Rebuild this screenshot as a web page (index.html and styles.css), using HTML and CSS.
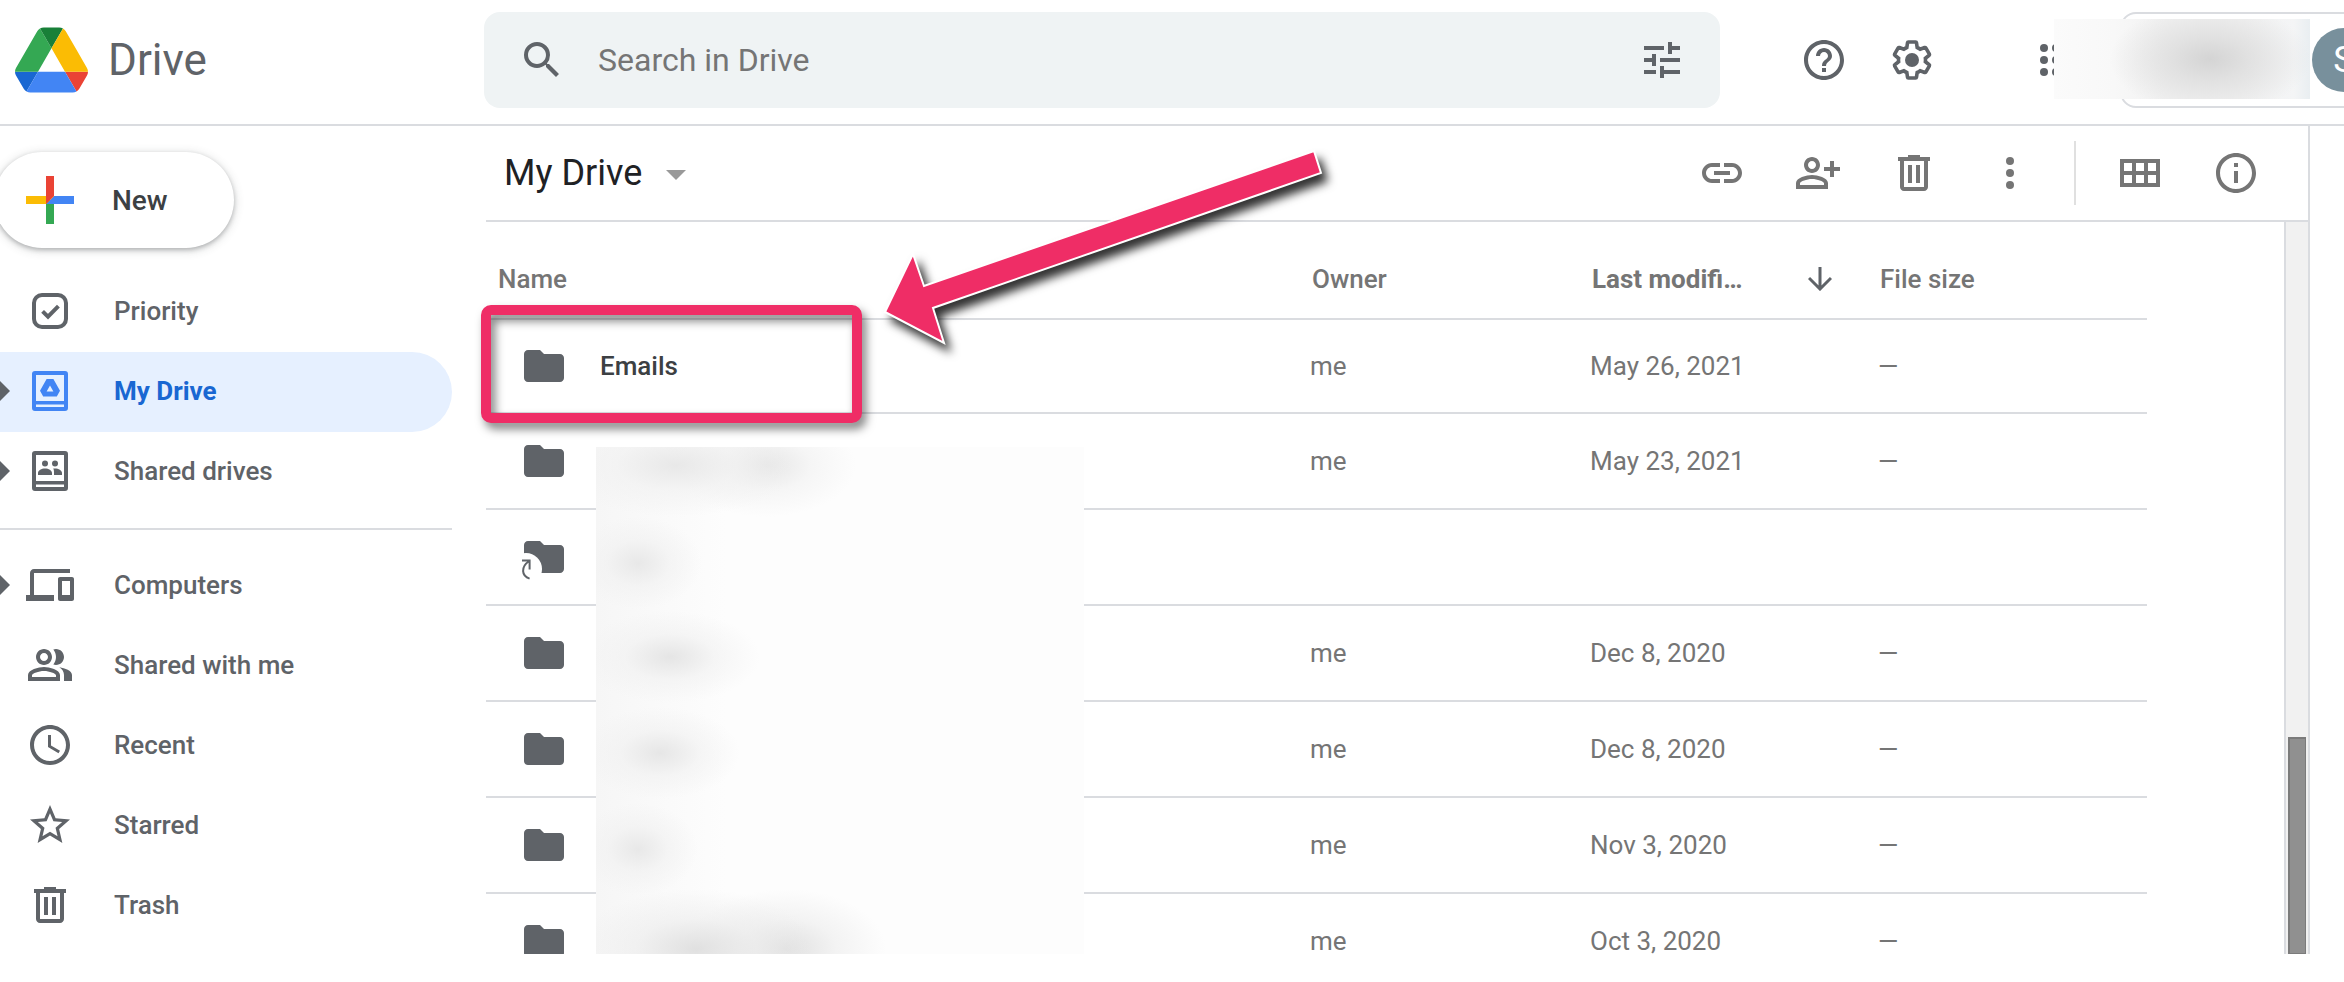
FILE: index.html
```html
<!DOCTYPE html>
<html lang="en">

<head>
    <meta charset="UTF-8">
    <meta name="viewport" content="width=device-width, initial-scale=1.0">
    <title>My Drive - Drive</title>
    <link rel="stylesheet" href="styles.css">
</head>

<body>
    <!-- icons used more than once -->
    <svg class="defs" aria-hidden="true">
        <symbol id="folder" viewBox="0 0 24 24">
            <path d="M10 4H4c-1.1 0-2 .9-2 2v12c0 1.1.9 2 2 2h16c1.1 0 2-.9 2-2V8c0-1.1-.9-2-2-2h-8l-2-2z" />
        </symbol>
        <symbol id="trash" viewBox="0 0 24 24">
            <path d="M15 4V3H9v1H4v2h1v13c0 1.1.9 2 2 2h10c1.1 0 2-.9 2-2V6h1V4h-5zm2 15H7V6h10v13zM9 8h2v9H9zM13 8h2v9h-2z" />
        </symbol>
    </svg>

    <header class="header">
        <a class="brand" href="#">
            <svg class="logo" viewBox="0 0 87.3 78" aria-hidden="true">
                <path fill="#1967d2" d="m6.6 66.85 3.85 6.65c.8 1.4 1.95 2.5 3.3 3.3l13.75-23.8h-27.5c0 1.55.4 3.1 1.2 4.5z" />
                <path fill="#34a853" d="m43.65 25-13.75-23.8c-1.35.8-2.5 1.9-3.3 3.3l-25.4 44a9.06 9.06 0 0 0 -1.2 4.5h27.5z" />
                <path fill="#ea4335" d="m73.55 76.8c1.35-.8 2.5-1.9 3.3-3.3l1.6-2.75 7.65-13.25c.8-1.4 1.2-2.95 1.2-4.5h-27.5z" />
                <path fill="#188038" d="m43.65 25 13.75-23.8c-1.35-.8-2.9-1.2-4.5-1.2h-18.5c-1.6 0-3.15.45-4.5 1.2z" />
                <path fill="#4285f4" d="m59.8 53h-32.3l-13.75 23.8c1.35.8 2.9 1.2 4.5 1.2h50.8c1.6 0 3.15-.45 4.5-1.2z" />
                <path fill="#fbbc04" d="m73.4 26.5-12.7-22c-.8-1.4-1.95-2.5-3.3-3.3l-13.75 23.8 16.15 28h27.45c0-1.55-.4-3.1-1.2-4.5z" />
            </svg>
            <span>Drive</span>
        </a>

        <form class="search" role="search">
            <button type="button" class="icon-btn" aria-label="Search">
                <svg class="icon" viewBox="0 0 24 24"><path d="M15.5 14h-.79l-.28-.27A6.47 6.47 0 0 0 16 9.5 6.5 6.5 0 1 0 9.5 16c1.61 0 3.09-.59 4.23-1.57l.27.28v.79l5 4.99L20.49 19l-4.99-5zm-6 0C7.01 14 5 11.99 5 9.5S7.01 5 9.5 5 14 7.01 14 9.5 11.99 14 9.5 14z" /></svg>
            </button>
            <input type="text" placeholder="Search in Drive" aria-label="Search in Drive">
            <button type="button" class="icon-btn" aria-label="Search options">
                <svg class="icon" viewBox="0 0 24 24"><path d="M3 17v2h6v-2H3zM3 5v2h10V5H3zm10 16v-2h8v-2h-8v-2h-2v6h2zM7 9v2H3v2h4v2h2V9H7zm14 4v-2H11v2h10zm-6-4h2V7h4V5h-4V3h-2v6z" /></svg>
            </button>
        </form>

        <div class="header-actions">
            <button type="button" class="icon-btn" aria-label="Support">
                <svg class="icon" viewBox="0 0 24 24"><path d="M11 18h2v-2h-2v2zm1-16C6.48 2 2 6.48 2 12s4.48 10 10 10 10-4.48 10-10S17.52 2 12 2zm0 18c-4.41 0-8-3.59-8-8s3.59-8 8-8 8 3.59 8 8-3.59 8-8 8zm0-14c-2.21 0-4 1.79-4 4h2c0-1.1.9-2 2-2s2 .9 2 2c0 2-3 1.75-3 5h2c0-2.25 3-2.5 3-5 0-2.21-1.79-4-4-4z" /></svg>
            </button>
            <button type="button" class="icon-btn" aria-label="Settings">
                <svg class="icon" viewBox="0 0 24 24">
                    <path class="line" transform="translate(1.2 1.2) scale(.9)" d="M19.43 12.98c.04-.32.07-.64.07-.98 0-.34-.03-.66-.07-.98l2.11-1.65c.19-.15.24-.42.12-.64l-2-3.46c-.09-.16-.26-.25-.44-.25-.06 0-.12.01-.17.03l-2.49 1c-.52-.4-1.08-.73-1.69-.98l-.38-2.65C14.46 2.18 14.25 2 14 2h-4c-.25 0-.46.18-.49.42l-.38 2.65c-.61.25-1.17.59-1.69.98l-2.49-1c-.06-.02-.12-.03-.18-.03-.17 0-.34.09-.43.25l-2 3.46c-.13.22-.07.49.12.64l2.11 1.65c-.04.32-.07.65-.07.98 0 .33.03.66.07.98l-2.11 1.65c-.19.15-.24.42-.12.64l2 3.46c.09.16.26.25.44.25.06 0 .12-.01.17-.03l2.49-1c.52.4 1.08.73 1.69.98l.38 2.65c.03.24.24.42.49.42h4c.25 0 .46-.18.49-.42l.38-2.65c.61-.25 1.17-.59 1.69-.98l2.49 1c.06.02.12.03.18.03.17 0 .34-.09.43-.25l2-3.46c.12-.22.07-.49-.12-.64l-2.11-1.65z" />
                    <circle cx="12" cy="12" r="3.5" />
                </svg>
            </button>
            <button type="button" class="icon-btn apps" aria-label="Google apps">
                <svg class="icon" viewBox="0 0 24 24">
                    <circle cx="6" cy="6" r="2" /><circle cx="12" cy="6" r="2" /><circle cx="18" cy="6" r="2" />
                    <circle cx="6" cy="12" r="2" /><circle cx="12" cy="12" r="2" /><circle cx="18" cy="12" r="2" />
                    <circle cx="6" cy="18" r="2" /><circle cx="12" cy="18" r="2" /><circle cx="18" cy="18" r="2" />
                </svg>
            </button>
            <button type="button" class="account" aria-label="Account"><span class="avatar">S</span></button>
            <div class="redact redact-account"></div>
        </div>
    </header>

    <div class="layout">
        <aside class="sidebar">
            <button type="button" class="new-btn">
                <svg viewBox="6 6 24 24" aria-hidden="true">
                    <path fill="#34a853" d="M16 16v14h4V20z" />
                    <path fill="#4285f4" d="M30 16H20l-4 4h14z" />
                    <path fill="#fbbc04" d="M6 16v4h10l4-4z" />
                    <path fill="#ea4335" d="M20 16V6h-4v14z" />
                </svg>
                New
            </button>
            <nav>
                <a class="nav-item" href="#">
                    <svg class="icon" viewBox="0 0 24 24">
                        <rect class="line" x="4" y="4" width="16" height="16" rx="4" />
                        <path class="line" d="M8.3 12.2l2.7 2.6 5.2-5.2" />
                    </svg>
                    Priority
                </a>
                <a class="nav-item has-arrow active" href="#">
                    <svg class="icon" viewBox="0 0 24 24">
                        <path fill-rule="evenodd" d="M4.5 2h15A1.5 1.5 0 0 1 21 3.5v17a1.5 1.5 0 0 1-1.5 1.5h-15A1.5 1.5 0 0 1 3 20.5v-17A1.5 1.5 0 0 1 4.5 2zM5 4v13h14V4zM5 18.8v1.2h14v-1.2z" />
                        <path fill-rule="evenodd" d="M10.3 6h3.4l3.3 5.9-1.6 2.9H8.6L7 11.9zM12 9.3l-1.7 3h3.4z" />
                    </svg>
                    My Drive
                </a>
                <a class="nav-item has-arrow" href="#">
                    <svg class="icon" viewBox="0 0 24 24">
                        <path fill-rule="evenodd" d="M4.5 2h15A1.5 1.5 0 0 1 21 3.5v17a1.5 1.5 0 0 1-1.5 1.5h-15A1.5 1.5 0 0 1 3 20.5v-17A1.5 1.5 0 0 1 4.5 2zM5 4v13h14V4zM5 18.8v1.2h14v-1.2z" />
                        <circle cx="9.5" cy="8.2" r="1.5" />
                        <circle cx="14.5" cy="8.2" r="1.5" />
                        <path d="M6 14v-1c0-1.4 1.7-2.3 3.5-2.3S13 11.600 13 13v1zM13.6 10.8c2-.4 4.4.6 4.4 2.2v1h-4v-1c0-.9 0-1.5-.4-2.2z" />
                    </svg>
                    Shared drives
                </a>
                <hr>
                <a class="nav-item has-arrow" href="#">
                    <svg class="icon" viewBox="0 0 24 24"><path d="M4 6h18V4H4c-1.1 0-2 .9-2 2v11H0v3h14v-3H4V6zm19 2h-6c-.55 0-1 .45-1 1v10c0 .55.45 1 1 1h6c.55 0 1-.45 1-1V9c0-.55-.45-1-1-1zm-1 9h-4v-7h4v7z" /></svg>
                    Computers
                </a>
                <a class="nav-item" href="#">
                    <svg class="icon" viewBox="0 0 24 24">
                        <path d="M9 12c2.21 0 4-1.79 4-4s-1.79-4-4-4-4 1.79-4 4 1.79 4 4 4zm0-6c1.1 0 2 .9 2 2s-.9 2-2 2-2-.9-2-2 .9-2 2-2zM9 13c-2.67 0-8 1.34-8 4v3h16v-3c0-2.66-5.33-4-8-4zm6 5H3v-.99C3.2 16.29 6.3 15 9 15s5.8 1.29 6 2v1z" />
                        <path d="M16.67 13.13C18.04 14.06 19 15.32 19 17v3h4v-3c0-2.18-3.57-3.47-6.33-3.87zM15 12c2.21 0 4-1.79 4-4s-1.79-4-4-4c-.47 0-.91.1-1.33.24C14.5 5.27 15 6.58 15 8s-.5 2.73-1.33 3.76c.42.14.86.24 1.33.24z" />
                    </svg>
                    Shared with me
                </a>
                <a class="nav-item" href="#">
                    <svg class="icon" viewBox="0 0 24 24"><path d="M12 2C6.47 2 2 6.48 2 12s4.47 10 10 10 10-4.48 10-10S17.52 2 12 2zm0 18c-4.42 0-8-3.58-8-8s3.58-8 8-8 8 3.58 8 8-3.58 8-8 8zm.5-13H11v6l5.25 3.15.75-1.23-4.5-2.67z" /></svg>
                    Recent
                </a>
                <a class="nav-item" href="#">
                    <svg class="icon" viewBox="0 0 24 24"><path d="M22 9.24l-7.19-.62L12 2 9.19 8.63 2 9.24l5.46 4.73L5.82 21 12 17.27 18.18 21l-1.63-7.03L22 9.24zM12 15.4l-3.76 2.27 1-4.28-3.32-2.88 4.38-.38L12 6.1l1.71 4.04 4.38.38-3.32 2.88 1 4.28L12 15.4z" /></svg>
                    Starred
                </a>
                <a class="nav-item" href="#">
                    <svg class="icon"><use href="#trash" /></svg>
                    Trash
                </a>
            </nav>
        </aside>

        <main class="main">
            <div class="toolbar">
                <button type="button" class="crumb">My Drive</button>
                <div class="tools">
                    <button type="button" class="icon-btn" aria-label="Get link">
                        <svg class="icon" viewBox="0 0 24 24"><path d="M17 7h-4v2h4c1.65 0 3 1.35 3 3s-1.35 3-3 3h-4v2h4c2.76 0 5-2.24 5-5s-2.24-5-5-5zm-6 8H7c-1.65 0-3-1.35-3-3s1.35-3 3-3h4V7H7c-2.76 0-5 2.24-5 5s2.24 5 5 5h4v-2zm-3-4h8v2H8z" /></svg>
                    </button>
                    <button type="button" class="icon-btn" aria-label="Share">
                        <svg class="icon" viewBox="0 0 24 24">
                            <path d="M9 12c2.21 0 4-1.79 4-4s-1.79-4-4-4-4 1.79-4 4 1.79 4 4 4zm0-6c1.1 0 2 .9 2 2s-.9 2-2 2-2-.9-2-2 .9-2 2-2zM9 13c-2.67 0-8 1.34-8 4v3h16v-3c0-2.66-5.33-4-8-4zm6 5H3v-.99C3.2 16.29 6.3 15 9 15s5.8 1.29 6 2v1z" />
                            <path d="M20 9V6h-2v3h-3v2h3v3h2v-3h3V9z" />
                        </svg>
                    </button>
                    <button type="button" class="icon-btn" aria-label="Remove">
                        <svg class="icon"><use href="#trash" /></svg>
                    </button>
                    <button type="button" class="icon-btn" aria-label="More actions">
                        <svg class="icon" viewBox="0 0 24 24"><circle cx="12" cy="6" r="2" /><circle cx="12" cy="12" r="2" /><circle cx="12" cy="18" r="2" /></svg>
                    </button>
                    <span class="separator"></span>
                    <button type="button" class="icon-btn" aria-label="Grid view">
                        <svg class="icon" viewBox="0 0 24 24"><path fill-rule="evenodd" d="M2 5h20v14H2zM4 7v4h4V7zM10 7v4h4V7zM16 7v4h4V7zM4 13v4h4v-4zM10 13v4h4v-4zM16 13v4h4v-4z" /></svg>
                    </button>
                    <button type="button" class="icon-btn" aria-label="View details">
                        <svg class="icon" viewBox="0 0 24 24"><path d="M11 7h2v2h-2zm0 4h2v6h-2zm1-9C6.48 2 2 6.48 2 12s4.48 10 10 10 10-4.48 10-10S17.52 2 12 2zm0 18c-4.41 0-8-3.59-8-8s3.59-8 8-8 8 3.59 8 8-3.59 8-8 8z" /></svg>
                    </button>
                </div>
            </div>

            <div class="content">
                <div class="list">
                    <table class="files">
                        <thead>
                            <tr>
                                <th class="col-name">Name</th>
                                <th class="col-owner">Owner</th>
                                <th class="col-date">
                                    <span class="sorted">Last modifi…
                                        <svg viewBox="0 0 24 24" aria-hidden="true"><path class="line" d="M12 0v22M1 11l11 11 11-11" /></svg>
                                    </span>
                                </th>
                                <th class="col-size">File size</th>
                            </tr>
                        </thead>
                        <tbody>
                            <tr>
                                <td><span class="file"><svg class="icon"><use href="#folder" /></svg>Emails</span></td>
                                <td>me</td>
                                <td>May 26, 2021</td>
                                <td>—</td>
                            </tr>
                            <tr>
                                <td><span class="file"><svg class="icon"><use href="#folder" /></svg></span></td>
                                <td>me</td>
                                <td>May 23, 2021</td>
                                <td>—</td>
                            </tr>
                            <tr>
                                <td>
                                    <span class="file">
                                        <svg class="icon" viewBox="0 0 24 24">
                                            <use href="#folder" />
                                            <circle cx="3" cy="18" r="8" fill="#fff" />
                                            <path class="line thin" d="M1 13.7h3.8v4.5M4.6 14C.2 17 .8 21.5 4.8 22.8" />
                                        </svg>
                                    </span>
                                </td>
                                <td></td>
                                <td></td>
                                <td></td>
                            </tr>
                            <tr>
                                <td><span class="file"><svg class="icon"><use href="#folder" /></svg></span></td>
                                <td>me</td>
                                <td>Dec 8, 2020</td>
                                <td>—</td>
                            </tr>
                            <tr>
                                <td><span class="file"><svg class="icon"><use href="#folder" /></svg></span></td>
                                <td>me</td>
                                <td>Dec 8, 2020</td>
                                <td>—</td>
                            </tr>
                            <tr>
                                <td><span class="file"><svg class="icon"><use href="#folder" /></svg></span></td>
                                <td>me</td>
                                <td>Nov 3, 2020</td>
                                <td>—</td>
                            </tr>
                            <tr>
                                <td><span class="file"><svg class="icon"><use href="#folder" /></svg></span></td>
                                <td>me</td>
                                <td>Oct 3, 2020</td>
                                <td>—</td>
                            </tr>
                        </tbody>
                    </table>
                    <div class="redact redact-names"></div>
                </div>
                <div class="scrollbar"><div class="thumb"></div></div>
            </div>

            <!-- callout over the Emails folder -->
            <div class="highlight"></div>
            <svg class="arrow" viewBox="0 0 460 210" aria-hidden="true">
                <path d="M5 168L33 110l11 32L434 7l7 22L53 164l11 35z" />
            </svg>
        </main>
    </div>
</body>

</html>
```
FILE: styles.css
```css
* {
    box-sizing: border-box;
}

body {
    display: flex;
    flex-direction: column;
    height: 100vh;
    margin: 0;
    padding-bottom: 28px;
    overflow: hidden;
    background-color: #fff;
    color: #757575;
    font-family: Roboto, "Liberation Sans", sans-serif;
    font-size: 26px;
}

button {
    padding: 0;
    border: none;
    background: none;
    color: inherit;
    font-family: inherit;
    cursor: pointer;
}

a {
    color: inherit;
    text-decoration: none;
}

.defs {
    display: none;
}

.icon {
    display: block;
    flex: none;
    width: 48px;
    height: 48px;
    fill: currentColor;
}

.line {
    fill: none;
    stroke: currentColor;
    stroke-width: 2;
}

.thin {
    stroke-width: 1;
}

.icon-btn {
    flex: none;
    width: 48px;
    height: 48px;
}

/* header */
.header {
    display: flex;
    flex: none;
    height: 126px;
    padding: 12px 0 16px;
    border-bottom: 2px solid #dadce0;
    color: #5f6368;
}

.brand {
    display: flex;
    flex: none;
    align-items: center;
    gap: 20px;
    width: 484px;
    padding-left: 15px;
    font-size: 44px;
}

.logo {
    width: 73px;
    height: 66px;
}

.search {
    display: flex;
    flex: 1;
    align-items: center;
    gap: 32px;
    min-width: 0;
    padding: 0 34px;
    border-radius: 16px;
    background-color: #eff3f4;
}

.search input {
    flex: 1;
    min-width: 0;
    padding: 0;
    border: none;
    outline: none;
    background: none;
    color: #202124;
    font-family: inherit;
    font-size: 32px;
}

.search input::placeholder {
    color: #757575;
    opacity: 1;
}

.header-actions {
    position: relative;
    display: flex;
    flex: none;
    align-items: center;
    gap: 40px;
    width: 624px;
    padding-left: 80px;
    overflow: hidden;
}

.apps {
    margin-left: 56px;
}

.account {
    flex: none;
    width: 300px;
    height: 96px;
    padding-left: 190px;
    border: 2px solid #dadce0;
    border-radius: 16px;
}

.avatar {
    display: block;
    width: 64px;
    height: 64px;
    border-radius: 50%;
    background-color: #78909c;
    color: #fff;
    font-size: 36px;
    line-height: 64px;
    text-align: center;
}

.redact {
    position: absolute;
    background-color: #fdfdfd;
}

.redact-account {
    top: 7px;
    right: 34px;
    width: 256px;
    height: 80px;
    background-image:
        radial-gradient(ellipse 100px 56px at 156px 40px, #d4d4d4, #dadadab0 40%, #eeeeee00),
        linear-gradient(90deg, #fbfbfb 0, #f8f8f8 60px, #f2f2f2 110px, #f2f2f2 190px, #f4f5f6 240px, #e9eef1 256px);
}

/* sidebar */
.layout {
    display: flex;
    flex: 1;
    min-height: 0;
}

.sidebar {
    flex: none;
    width: 486px;
    padding: 26px 34px 0 0;
    color: #5f6368;
    font-weight: 500;
}

.new-btn {
    display: flex;
    align-items: center;
    gap: 38px;
    width: 240px;
    height: 96px;
    margin: 0 0 24px -6px;
    padding-left: 32px;
    border-radius: 48px;
    box-shadow: 0 2px 4px rgba(60, 64, 67, .3), 0 2px 8px 2px rgba(60, 64, 67, .15);
    color: #3c4043;
    font-size: 28px;
    font-weight: 500;
}

.new-btn svg {
    width: 48px;
    height: 48px;
}

.nav-item {
    display: flex;
    align-items: center;
    gap: 40px;
    height: 80px;
    padding: 0 0 2px 26px;
    border-radius: 0 40px 40px 0;
}

.has-arrow {
    padding-left: 0;
}

.has-arrow::before {
    content: '';
    width: 10px;
    height: 20px;
    margin-right: -24px;
    background-color: #5f6368;
    clip-path: polygon(0 0, 100% 50%, 0 100%);
}

.active {
    background-color: #e6f0ff;
    color: #1967d2;
    font-weight: 700;
}

.active .icon {
    color: #4285f4;
}

.sidebar hr {
    height: 2px;
    margin: 16px 0;
    border: none;
    background-color: #dadce0;
}

/* main */
.main {
    position: relative;
    display: flex;
    flex: 1;
    flex-direction: column;
    min-width: 0;
    margin-right: 34px;
    border-right: 2px solid #dadce0;
}

.toolbar {
    display: flex;
    flex: none;
    align-items: center;
    justify-content: space-between;
    height: 96px;
    padding: 0 48px 0 18px;
    border-bottom: 2px solid #dadce0;
}

.crumb {
    display: flex;
    align-items: center;
    gap: 24px;
    color: #202124;
    font-size: 36px;
}

.crumb::after {
    content: '';
    margin-top: 4px;
    border: 10px solid transparent;
    border-top-color: #999;
    border-bottom: none;
}

.tools {
    display: flex;
    align-items: center;
    gap: 48px;
}

.separator {
    width: 2px;
    height: 64px;
    margin: 0 -8px;
    background-color: #e0e0e0;
}

.content {
    display: flex;
    flex: 1;
    min-height: 0;
}

.list {
    position: relative;
    flex: 1;
    padding-right: 137px;
    overflow: hidden;
}

.files {
    width: 100%;
    border-collapse: separate;
    border-spacing: 0;
    table-layout: fixed;
}

.files th,
.files td {
    height: 96px;
    padding: 0;
    border-bottom: 2px solid #dadce0;
    text-align: left;
    white-space: nowrap;
}

.files th {
    height: 98px;
    padding: 18px 0 0 2px;
    font-weight: 500;
}

.files tbody tr:first-child td {
    height: 94px;
}

.files .col-name {
    padding-left: 12px;
}

.col-owner {
    width: 280px;
}

.col-date {
    width: 288px;
}

.col-size {
    width: 269px;
}

.sorted {
    display: flex;
    align-items: center;
    justify-content: space-between;
    width: 240px;
    font-weight: 700;
}

.sorted svg {
    width: 24px;
    height: 24px;
    color: #5f6368;
}

.sorted .line {
    stroke-width: 3;
}

.file {
    display: flex;
    align-items: center;
    gap: 32px;
    padding-left: 34px;
    color: #3c4043;
    font-weight: 500;
}

.file .icon {
    color: #5f6368;
    overflow: visible;
}

/* smudges stand where the folder names are hidden */
.redact-names {
    top: 225px;
    bottom: 0;
    left: 110px;
    width: 488px;
    background-image:
        radial-gradient(ellipse 120px 52px at 80px 18px, #e8e8e8, #f0f0f090 50%, #fafafa00),
        radial-gradient(ellipse 90px 52px at 170px 18px, #e6e6e6, #f0f0f090 50%, #fafafa00),
        radial-gradient(ellipse 64px 46px at 42px 116px, #e8e8e8, #f0f0f090 50%, #fafafa00),
        radial-gradient(ellipse 90px 46px at 74px 210px, #e5e5e5, #f0f0f090 50%, #fafafa00),
        radial-gradient(ellipse 80px 46px at 64px 306px, #e6e6e6, #f0f0f090 50%, #fafafa00),
        radial-gradient(ellipse 60px 46px at 42px 402px, #e8e8e8, #f0f0f090 50%, #fafafa00),
        radial-gradient(ellipse 120px 60px at 100px 502px, #e0e0e0, #ebebeb90 50%, #fafafa00),
        radial-gradient(ellipse 100px 60px at 190px 502px, #e0e0e0, #ebebeb90 50%, #fafafa00),
        linear-gradient(90deg, #f6f6f6, #fdfdfd 130px);
}

.scrollbar {
    display: flex;
    flex: none;
    align-items: flex-end;
    width: 24px;
    padding: 0 2px;
    border-left: 2px solid #dadce0;
    background-color: #f1f1f1;
}

.thumb {
    width: 18px;
    height: 217px;
    border: 2px solid #7b7b7b;
    border-width: 2px 1px 1px 2px;
    background-color: #909090;
}

/* callout */
.highlight {
    position: absolute;
    top: 179px;
    left: -5px;
    width: 381px;
    height: 118px;
    border: 10px solid #ef2d66;
    border-radius: 10px;
    filter: drop-shadow(4px 6px 5px rgba(0, 0, 0, .5));
}

.arrow {
    position: absolute;
    top: 18px;
    left: 394px;
    width: 460px;
    height: 210px;
    overflow: visible;
    fill: #ef2d66;
    stroke: #fff;
    stroke-width: 2;
    filter: drop-shadow(6px 8px 5px rgba(0, 0, 0, .8));
}
```
